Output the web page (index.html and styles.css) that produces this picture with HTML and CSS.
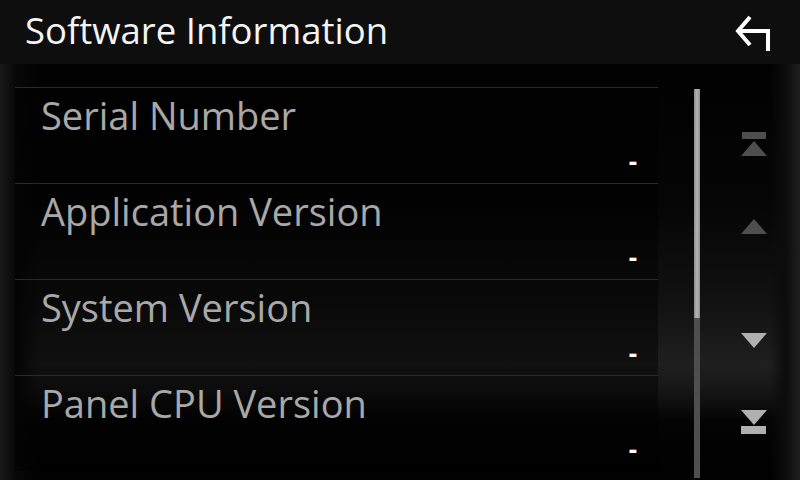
FILE: index.html
```html
<!DOCTYPE html>
<html>

<head>
    <meta charset="utf-8">
    <title>Software Information</title>
    <meta name="viewport" content="width=device-width, initial-scale=1.0">
    <link rel="stylesheet" href="styles.css">
</head>

<body>
    <div id="screen">
        <div id="header">
            <span id="title">Software Information</span>
            <svg id="backButton" width="38" height="38" viewBox="0 0 38 38">
                <path d="M16 3 L4 17 L16 31 M4 17 H34 V37" fill="none" stroke="#fff" stroke-width="4" stroke-miterlimit="10"></path>
            </svg>
        </div>

        <div id="content">
            <ol id="infoList">
                <li class="infoRow">
                    <span class="infoLabel">Serial Number</span>
                    <span class="infoValue">-</span>
                </li>
                <li class="infoRow">
                    <span class="infoLabel">Application Version</span>
                    <span class="infoValue">-</span>
                </li>
                <li class="infoRow">
                    <span class="infoLabel">System Version</span>
                    <span class="infoValue">-</span>
                </li>
                <li class="infoRow">
                    <span class="infoLabel">Panel CPU Version</span>
                    <span class="infoValue">-</span>
                </li>
            </ol>

            <div id="scrollTrack">
                <div id="scrollThumb"></div>
            </div>

            <div id="pager">
                <div class="pageGroup">
                    <div class="pageButton disabled">
                        <svg width="26" height="24" viewBox="0 0 26 24">
                            <rect x="1" y="0" width="24" height="7"></rect>
                            <polygon points="13,9 26,24 0,24"></polygon>
                        </svg>
                    </div>
                    <div class="pageButton disabled">
                        <svg width="26" height="15" viewBox="0 0 26 15">
                            <polygon points="13,0 26,15 0,15"></polygon>
                        </svg>
                    </div>
                </div>
                <div class="pageGroup">
                    <div class="pageButton">
                        <svg width="26" height="15" viewBox="0 0 26 15">
                            <polygon points="0,0 26,0 13,15"></polygon>
                        </svg>
                    </div>
                    <div class="pageButton">
                        <svg width="26" height="24" viewBox="0 0 26 24">
                            <polygon points="0,0 26,0 13,15"></polygon>
                            <rect x="0" y="16" width="25" height="8"></rect>
                        </svg>
                    </div>
                </div>
            </div>
        </div>
    </div>
</body>
</html>
```

FILE: styles.css
```css
html, body {
    margin: 0;
    padding: 0;
    background-color: black;
}

#screen {
    width: 800px;
    height: 480px;
    overflow: hidden;
    font-family: "Open Sans", "Noto Sans", sans-serif;
    display: flex;
    flex-direction: column;
    background:
        linear-gradient(90deg, #1a1a1a 0px, #080808 15px, transparent 40px, transparent 770px, #0c0c0c 785px, #1e1e1e 800px),
        linear-gradient(180deg, #000 0px, #050505 200px, #111 300px, #1f1f1f 365px, #161616 390px, #040404 420px, #000 480px);
}

#header {
    height: 64px;
    flex: none;
    background-color: #0e0e0e;
    display: flex;
    align-items: center;
    justify-content: space-between;
    padding: 0 28px 0 25px;
}

#title {
    color: #f4f4f4;
    font-size: 36.5px;
    line-height: 1;
    padding-bottom: 4px;
}

#backButton {
    display: block;
    margin-top: 2px;
}

#content {
    flex: 1;
    display: flex;
}

#infoList {
    list-style: none;
    margin: 23px 0 0 15px;
    padding: 0;
    width: 643px;
}

.infoRow {
    height: 95px;
    border-top: 1px solid #2a2a2a;
    background-color: rgba(0, 0, 0, 0.45);
    display: flex;
    flex-direction: column;
    padding: 0 21px 0 26px;
}

.infoLabel {
    color: #a8a8a8;
    font-size: 38px;
    line-height: 1;
    margin-top: 8px;
}

.infoValue {
    color: white;
    font-size: 26px;
    font-weight: bold;
    line-height: 1;
    align-self: flex-end;
    margin-top: 14px;
}

#scrollTrack {
    width: 6px;
    height: 389px;
    margin: 25px 0 0 36px;
    background-color: #4e4e4e;
}

#scrollThumb {
    height: 229px;
    background: linear-gradient(90deg, #8c8c8c, #b4b4b4 50%, #8c8c8c);
}

#pager {
    display: flex;
    flex-direction: column;
    gap: 32px;
    padding: 39px 0 0 41px;
}

.pageButton {
    width: 26px;
    height: 82px;
    display: flex;
    align-items: center;
    justify-content: center;
}

.pageButton svg {
    display: block;
    fill: #b0b0b0;
}

.pageButton.disabled svg {
    fill: #4e4e4e;
}
```
